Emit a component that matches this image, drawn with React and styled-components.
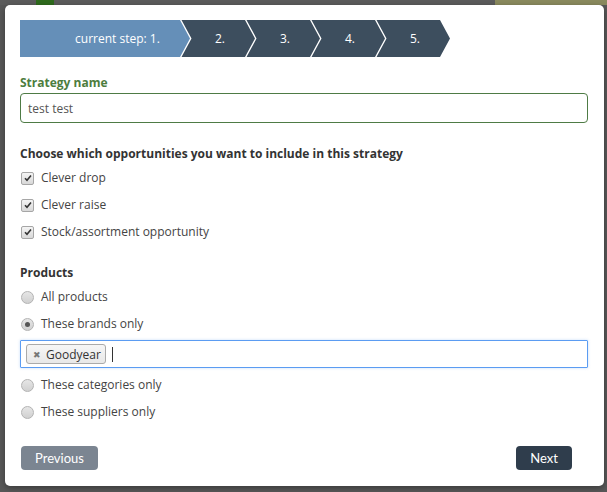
import React, { useState } from 'react';
import styled, { createGlobalStyle } from 'styled-components';

const GlobalStyle = createGlobalStyle`
  html, body {
    margin: 0;
    padding: 0;
    background: #585858;
  }
  body {
    font-family: "Open Sans", "Liberation Sans", sans-serif;
    font-size: 12px;
    color: #333;
  }
`;

const steps = ['current step: 1.', '2.', '3.', '4.', '5.'];

const opportunities = [
  { id: 'drop', label: 'Clever drop' },
  { id: 'raise', label: 'Clever raise' },
  { id: 'stock', label: 'Stock/assortment opportunity' },
];

const productScopes = [
  { id: 'all', label: 'All products' },
  { id: 'brands', label: 'These brands only' },
  { id: 'categories', label: 'These categories only' },
  { id: 'suppliers', label: 'These suppliers only' },
];

function CheckMark() {
  return (
    <svg width="8" height="8" viewBox="0 0 8 8">
      <path d="M1 4.2 L3 6.3 L7 1.5" fill="none" stroke="#333" strokeWidth="1.6" />
    </svg>
  );
}

function App() {
  const [name, setName] = useState('test test');
  const [checked, setChecked] = useState({ drop: true, raise: true, stock: true });
  const [scope, setScope] = useState('brands');
  const [brands, setBrands] = useState(['Goodyear']);

  const toggle = (id) => setChecked({ ...checked, [id]: !checked[id] });

  return (
    <Backdrop>
      <GlobalStyle />
      <PageHint />
      <Modal>
        <Stepper>
          {steps.map((step, i) => (
            <Step key={step} first={i === 0} active={i === 0}>
              {step}
            </Step>
          ))}
        </Stepper>

        <FieldLabel>Strategy name</FieldLabel>
        <TextInput value={name} onChange={(e) => setName(e.target.value)} />

        <SectionTitle>Choose which opportunities you want to include in this strategy</SectionTitle>
        <OptionList>
          {opportunities.map((o) => (
            <Option key={o.id} onClick={() => toggle(o.id)}>
              <CheckBox>{checked[o.id] && <CheckMark />}</CheckBox>
              {o.label}
            </Option>
          ))}
        </OptionList>

        <SectionTitle>Products</SectionTitle>
        <OptionList last>
          {productScopes.map((s) => (
            <React.Fragment key={s.id}>
              <Option onClick={() => setScope(s.id)}>
                <Radio selected={scope === s.id} />
                {s.label}
              </Option>
              {s.id === 'brands' && scope === 'brands' && (
                <TagInput>
                  {brands.map((b) => (
                    <Tag key={b}>
                      <TagRemove onClick={() => setBrands(brands.filter((x) => x !== b))}>✖</TagRemove>
                      {b}
                    </Tag>
                  ))}
                  <Caret />
                </TagInput>
              )}
            </React.Fragment>
          ))}
        </OptionList>

        <Footer>
          <Button variant="secondary">Previous</Button>
          <Button variant="primary">Next</Button>
        </Footer>
      </Modal>
    </Backdrop>
  );
}

export default App;

const Backdrop = styled.div`
  position: relative;
  min-height: 492px;
  padding: 5px 3px 5px 5px;
  box-sizing: border-box;
  overflow: hidden;
`;

const PageHint = styled.div`
  position: absolute;
  top: 0;
  left: 0;
  right: 0;
  height: 5px;
  background: linear-gradient(
    to right,
    #5c5c5c 0,
    #5c5c5c 36px,
    #2f6b1d 36px,
    #2f6b1d 54px,
    #5c5c5c 54px,
    #5c5c5c 495px,
    #8a8a5e 495px
  );
`;

const Modal = styled.div`
  position: relative;
  background: #fff;
  border-radius: 5px;
  padding: 15px 16px 16px 15px;
  width: 599px;
  box-sizing: border-box;
  box-shadow: 0 2px 6px rgba(0, 0, 0, 0.35);
`;

const Stepper = styled.div`
  display: flex;
  height: 37px;
  margin-bottom: 18px;
`;

const Step = styled.div`
  display: flex;
  align-items: center;
  justify-content: center;
  height: 37px;
  color: #fff;
  font-size: 12px;
  width: ${(p) => (p.first ? '170px' : '75px')};
  margin-left: ${(p) => (p.first ? '0' : '-10px')};
  padding-left: ${(p) => (p.first ? '25px' : '5px')};
  box-sizing: border-box;
  background: ${(p) => (p.active ? '#658fb8' : '#3d4e5e')};
  clip-path: ${(p) =>
    p.first
      ? 'polygon(0 0, calc(100% - 10px) 0, 100% 50%, calc(100% - 10px) 100%, 0 100%)'
      : 'polygon(1.5px 0, calc(100% - 10px) 0, 100% 50%, calc(100% - 10px) 100%, 1.5px 100%, 11.5px 50%)'};
`;

const FieldLabel = styled.div`
  color: #4d7d3e;
  font-weight: 700;
  font-size: 12px;
  line-height: 16px;
  margin-bottom: 2px;
`;

const TextInput = styled.input`
  display: block;
  width: 100%;
  box-sizing: border-box;
  height: 30px;
  border: 1px solid #4e7b45;
  border-radius: 4px;
  padding: 0 7px;
  font-family: "Open Sans", "Liberation Sans", sans-serif;
  font-size: 12px;
  color: #555;
  outline: none;
  margin-bottom: 23px;
`;

const SectionTitle = styled.div`
  font-weight: 700;
  font-size: 12px;
  line-height: 16px;
  color: #333;
  margin-bottom: 7px;
`;

const OptionList = styled.div`
  display: flex;
  flex-direction: column;
  gap: 9px;
  margin-bottom: ${(p) => (p.last ? '0' : '24px')};
`;

const Option = styled.label`
  display: flex;
  align-items: center;
  gap: 7px;
  height: 18px;
  line-height: 18px;
  color: #444;
  cursor: pointer;
  padding-left: 1px;
`;

const CheckBox = styled.span`
  display: inline-flex;
  align-items: center;
  justify-content: center;
  width: 11px;
  height: 11px;
  border: 1px solid #a6a6a6;
  border-radius: 2px;
  background: linear-gradient(#f4f4f4, #d8d8d8);
`;

const Radio = styled.span`
  position: relative;
  display: inline-block;
  width: 11px;
  height: 11px;
  border: 1px solid #b3b3b3;
  border-radius: 50%;
  background: linear-gradient(#e6e6e6, #d0d0d0);

  &::after {
    content: '';
    display: ${(p) => (p.selected ? 'block' : 'none')};
    position: absolute;
    top: 3px;
    left: 3px;
    width: 5px;
    height: 5px;
    border-radius: 50%;
    background: #555;
  }
`;

const TagInput = styled.div`
  display: flex;
  align-items: center;
  gap: 6px;
  height: 28px;
  box-sizing: border-box;
  border: 1.5px solid #5b9cf2;
  border-radius: 1px;
  padding: 0 5px;
  margin: -2px 0 -1px;
  box-shadow: 0 0 3px rgba(91, 156, 242, 0.35);
`;

const Tag = styled.span`
  display: inline-flex;
  align-items: center;
  gap: 5px;
  height: 20px;
  box-sizing: border-box;
  padding: 0 4px 0 6px;
  background: linear-gradient(#f6f6f6, #e8e8e8);
  border: 1px solid #aaa;
  border-radius: 3px;
  color: #333;
  font-size: 12px;
`;

const TagRemove = styled.span`
  color: #777;
  font-size: 9px;
  cursor: pointer;
  line-height: 1;
`;

const Caret = styled.span`
  display: inline-block;
  width: 1px;
  height: 15px;
  background: #333;
`;

const Footer = styled.div`
  display: flex;
  justify-content: space-between;
  align-items: center;
  padding: 0 16px 0 1px;
  margin-top: 25px;
`;

const Button = styled.button`
  height: 24px;
  border: none;
  border-radius: 4px;
  padding: 0 14px;
  font-family: "Lato", "Liberation Sans", sans-serif;
  font-size: 13px;
  color: #fff;
  background: ${(p) => (p.variant === 'primary' ? '#2f3d4c' : '#7b8591')};
  cursor: pointer;
`;
